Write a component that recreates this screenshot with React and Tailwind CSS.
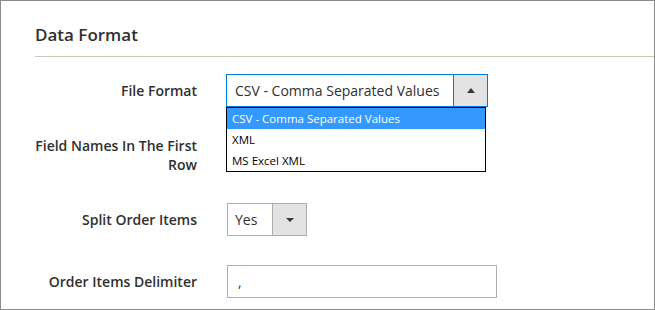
export default function App() {
  return (
    <div
      className="relative w-[655px] h-[310px] overflow-hidden border border-[#8c8c8c] bg-white text-[#303030]"
      style={{ fontFamily: '"Open Sans", "Liberation Sans", sans-serif' }}
    >
      <div className="ml-[34px] mt-[24px]">
        <h2 className="text-[17px] leading-[20px] font-semibold text-[#303030]">Data Format</h2>
        <div className="mt-[11px] border-b border-[#cdc6b8]" />
      </div>

      <div className="ml-[34px] flex flex-col">
        {/* File Format */}
        <div className="mt-[17px] flex items-start">
          <div className="w-[162px] pt-[9px] text-right text-[14px] leading-[16px] font-semibold">File Format</div>
          <div className="relative ml-[29px] flex h-[33px] w-[262px] border border-[#007bdb] bg-white">
            <div className="flex flex-1 items-center pl-[8px] text-[14px]">CSV - Comma Separated Values</div>
            <div className="flex w-[34px] items-center justify-center border-l border-[#007bdb] bg-[#e3e3e3]">
              <div className="h-0 w-0 border-x-[4px] border-b-[5px] border-x-transparent border-b-[#41362f]" />
            </div>
            <div className="absolute left-[-1px] top-[32px] z-10 w-[260px] border border-black bg-white text-[11.5px]">
              <div className="flex h-[21px] items-center bg-[#3399ff] pl-[5px] text-white">CSV - Comma Separated Values</div>
              <div className="flex h-[21px] items-center pl-[5px] text-black">XML</div>
              <div className="flex h-[21px] items-center pl-[5px] text-black">MS Excel XML</div>
            </div>
          </div>
        </div>

        {/* Field Names In The First Row (its control lies under the open list) */}
        <div className="mt-[22px] flex items-start">
          <div className="w-[162px] pt-[7px] text-right text-[14px] leading-[19px] font-semibold">
            Field Names In The First
            <br />
            Row
          </div>
        </div>

        {/* Split Order Items */}
        <div className="mt-[29px] flex items-start">
          <div className="w-[162px] pt-[9px] text-right text-[14px] leading-[16px] font-semibold">Split Order Items</div>
          <div className="ml-[30px] flex h-[33px] w-[80px] border border-[#adadad] bg-white">
            <div className="flex flex-1 items-center pl-[7px] text-[14px]">Yes</div>
            <div className="flex w-[34px] items-center justify-center border-l border-[#adadad] bg-[#e3e3e3]">
              <div className="h-0 w-0 border-x-[4px] border-t-[4px] border-x-transparent border-t-[#41362f]" />
            </div>
          </div>
        </div>

        {/* Order Items Delimiter */}
        <div className="mt-[29px] flex items-start">
          <div className="w-[162px] pt-[9px] text-right text-[14px] leading-[16px] font-semibold">Order Items Delimiter</div>
          <div className="ml-[30px] flex h-[33px] w-[270px] items-center border border-[#adadad] bg-white pl-[10px] text-[14px]">
            ,
          </div>
        </div>
      </div>
    </div>
  );
}
